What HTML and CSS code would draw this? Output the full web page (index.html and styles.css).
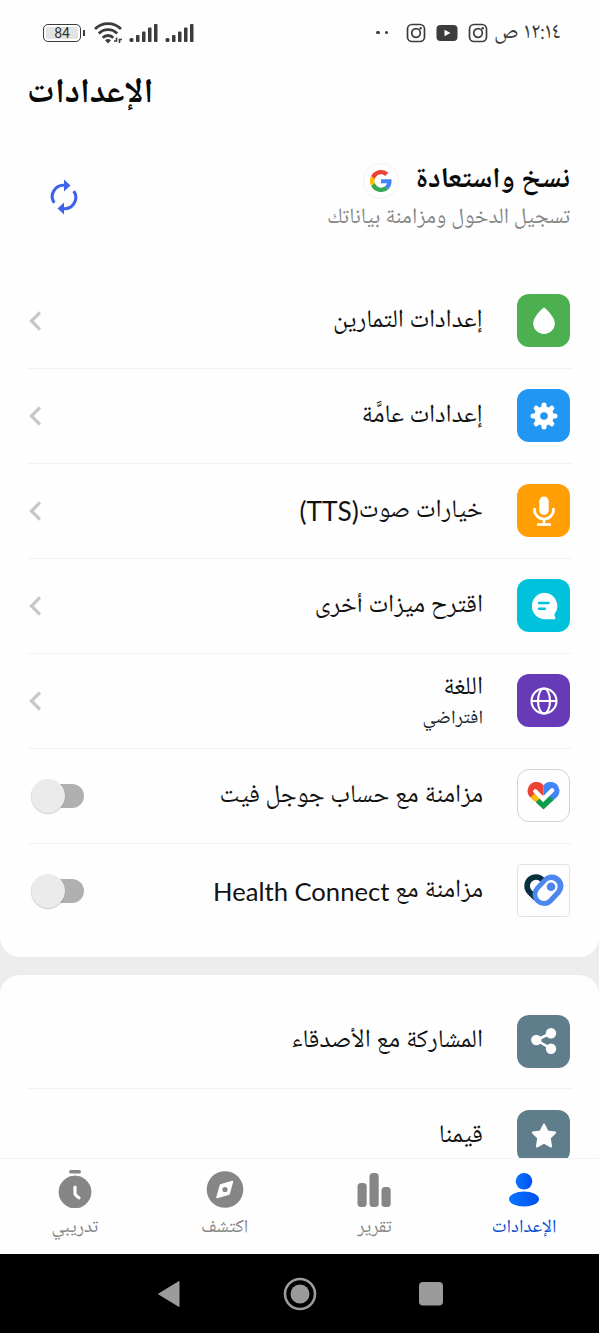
FILE: index.html
```html
<!DOCTYPE html>
<html lang="ar" dir="rtl">
<head>
<meta charset="utf-8">
<title>الإعدادات</title>
<link rel="stylesheet" href="styles.css">
</head>
<body>
<svg class="defs" width="0" height="0">
  <defs>
    <symbol id="chevron" viewBox="0 0 12 20"><path d="M11 1.500 2.500 10l8.500 8.500" fill="none" stroke="#c8c8c8" stroke-width="3.300"/></symbol>
    <symbol id="insta" viewBox="0 0 20 20"><g fill="none" stroke="#3c3c3c" stroke-width="1.700"><rect x="1.500" y="1.500" width="17" height="17" rx="4.500"/><circle cx="10" cy="10" r="4.300"/></g><circle cx="14.700" cy="5.200" r="1.200" fill="#3c3c3c"/></symbol>
    <symbol id="signal" viewBox="0 0 30 20"><g fill="#3c3c3c"><rect x="0.500" y="15" width="4" height="4" rx="1.500"/><rect x="7" y="12" width="3.500" height="7" rx=".8"/><rect x="13" y="8.500" width="3.500" height="10.500" rx=".8"/><rect x="19" y="4.500" width="3.500" height="14.500" rx=".8"/><rect x="25" y="1" width="3.500" height="18" rx=".8"/></g></symbol>
    <clipPath id="heart"><path d="M16.500 3.200A8.600 8.600 0 0 1 30.500 14.500L16.500 27.500 2.500 14.500A8.600 8.600 0 0 1 16.500 3.200z"/></clipPath>
  </defs>
</svg>
<div class="screen">
  <header class="status">
    <div class="status-start">
      <span class="clock">١٢:١٤ ص</span>
      <svg class="app" width="20" height="20"><use href="#insta"/></svg>
      <svg class="app" width="22" height="18" viewBox="0 0 22 18"><rect x=".5" y="1" width="21" height="16" rx="4" fill="#3c3c3c"/><path d="M8.500 5.800v6.400l6-3.200z" fill="#fff"/></svg>
      <svg class="app" width="20" height="20"><use href="#insta"/></svg>
      <span class="dots"><i></i><i></i></span>
    </div>
    <div class="status-end">
      <svg width="30" height="20"><use href="#signal"/></svg>
      <svg width="30" height="20"><use href="#signal"/></svg>
      <svg class="wifi" width="28" height="22" viewBox="0 0 28 22"><g fill="none" stroke="#3c3c3c" stroke-width="2.800"><path d="M1 7a18.500 18.500 0 0 1 26 0"/><path d="M4.800 11.500a13 13 0 0 1 18.400 0"/><path d="M8.700 15.700a7.500 7.500 0 0 1 10.600 0"/></g><path d="M11 18.200q3-2.400 6 0L14 21.500z" fill="#3c3c3c"/><path d="M20 19h2.500v-3.500M25.500 21v-3.500H28" fill="none" stroke="#3c3c3c" stroke-width="1.600"/></svg>
      <span class="battery"><b>84</b></span>
    </div>
  </header>

  <main class="content">
    <section class="card card-main">
      <h1>الإعدادات</h1>
      <div class="backup">
        <div class="backup-text">
          <div class="backup-head">
            <h2>نسخ واستعادة</h2>
            <span class="google"><svg width="22" height="22" viewBox="0 0 48 48"><path fill="#4285f4" d="M46.980 24.550c0-1.570-.15-3.090-.38-4.550H24v9.020h12.940c-.58 2.960-2.260 5.480-4.780 7.180l7.730 6c4.510-4.180 7.090-10.360 7.090-17.650z"/><path fill="#34a853" d="M24 48c6.480 0 11.930-2.130 15.890-5.810l-7.730-6c-2.150 1.450-4.920 2.300-8.160 2.300-6.260 0-11.570-4.220-13.470-9.910l-7.980 6.190C6.510 42.620 14.620 48 24 48z"/><path fill="#fbbc05" d="M10.530 28.590a14.500 14.500 0 0 1 0-9.180l-7.980-6.190a24 24 0 0 0 0 21.560z"/><path fill="#ea4335" d="M24 9.500c3.540 0 6.710 1.220 9.210 3.600l6.850-6.850C35.900 2.380 30.470 0 24 0 14.620 0 6.510 5.380 2.560 13.220l7.980 6.190C12.430 13.720 17.740 9.500 24 9.500z"/></svg></span>
          </div>
          <p>تسجيل الدخول ومزامنة بياناتك</p>
        </div>
        <svg class="sync" width="28" height="36" viewBox="0 0 28 36"><g fill="none" stroke="#4163ea" stroke-width="3.100"><path d="M4.200 23.800A11.300 11.300 0 0 1 15 6.300"/><path d="M23.800 12.200A11.300 11.300 0 0 1 13 29.700"/></g><path fill="#4163ea" d="M14 .5 20.500 6.500 14 12.500zM14 23.500 7.500 29.500 14 35.500z"/></svg>
      </div>
      <ul class="rows">
        <li class="row"><span class="tile green"><svg width="24" height="28" viewBox="0 0 24 28"><path fill="#fff" d="M12 .5c.8 0 10.800 9.200 10.800 15.700a10.800 10.800 0 0 1-21.600 0C1.200 9.700 11.200.5 12 .5z"/></svg></span><div class="label">إعدادات التمارين</div><svg class="chev" width="12" height="20"><use href="#chevron"/></svg></li>
        <li class="row"><span class="tile blue"><svg width="28" height="28" viewBox="-14 -14 28 28"><g stroke="#fff" stroke-width="5" stroke-linecap="round"><path d="M0-11V11M-11 0H11M-7.800-7.800 7.800 7.800M7.800-7.800-7.800 7.800"/></g><circle r="9.800" fill="#fff"/><circle r="3.800" fill="#2196f3"/></svg></span><div class="label">إعدادات عامَّة</div><svg class="chev" width="12" height="20"><use href="#chevron"/></svg></li>
        <li class="row"><span class="tile orange"><svg width="24" height="32" viewBox="0 0 24 32"><rect x="7.300" y="1.500" width="9.400" height="18.500" rx="4.700" fill="#fff"/><path d="M2.500 13v1.500a9.500 9.500 0 0 0 19 0V13M12 24v5M5 29.500h14" fill="none" stroke="#fff" stroke-width="2.700"/></svg></span><div class="label">خيارات صوت<span class="latin tts">(TTS)</span></div><svg class="chev" width="12" height="20"><use href="#chevron"/></svg></li>
        <li class="row"><span class="tile cyan"><svg width="28" height="28" viewBox="0 0 28 28"><path d="M14 .7a13.300 13.300 0 0 1 10.300 21.700L25.300 26q.2 1.200-1 1.200H14A13.300 13.300 0 0 1 14 .7z" fill="#fff"/><path d="M9 11h9.500M9 16.800h6" stroke="#00c2dc" stroke-width="2.400" stroke-linecap="round"/></svg></span><div class="label">اقترح ميزات أخرى</div><svg class="chev" width="12" height="20"><use href="#chevron"/></svg></li>
        <li class="row"><span class="tile purple"><svg width="28" height="28" viewBox="0 0 28 28"><g fill="none" stroke="#fff" stroke-width="2.100"><circle cx="14" cy="14" r="12.500"/><ellipse cx="14" cy="14" rx="6" ry="12.500"/><path d="M1.500 14h25"/></g></svg></span><div class="label two"><span>اللغة</span><span class="sub">افتراضي</span></div><svg class="chev" width="12" height="20"><use href="#chevron"/></svg></li>
        <li class="row"><span class="tile fit"><svg width="33" height="28" viewBox="0 0 33 28"><g clip-path="url(#heart)"><path fill="#ea4335" d="M0 0h16.500v13L5.500 20 0 14z"/><path fill="#4285f4" d="M16.500 0H33v15l-6 5.500-10.500-7z"/><path fill="#fbbc04" d="m3.500 15.500 3.500-3.500 7.500 3-6 6z"/><path fill="#0f9d48" d="m8.500 20.500 5.500-5.500 2.500 2.500 5.500-4.500 4.500 5.500-10 9.500z"/></g><path d="M8.300 9.300 16.200 17.200 25.200 8.300" fill="none" stroke="#fff" stroke-width="4.400" stroke-linecap="round"/></svg></span><div class="label">مزامنة مع حساب جوجل فيت</div><span class="switch"><i></i></span></li>
        <li class="row"><span class="tile health"><svg width="40" height="34" viewBox="0 0 40 34"><path d="M18.500 5.800A8.900 8.900 0 0 0 5.500 18L12 24.500" fill="none" stroke="#07303f" stroke-width="5.600"/><path d="M28 12 20 20.500" stroke="#4c86ee" stroke-width="23" stroke-linecap="round"/><path d="M27.200 12.500 19.800 20.500" stroke="#fff" stroke-width="13" stroke-linecap="round"/><circle cx="27" cy="12.800" r="4.300" fill="#4c86ee"/></svg></span><div class="label">مزامنة مع <span class="latin">Health Connect</span></div><span class="switch"><i></i></span></li>
      </ul>
    </section>
    <section class="card card-more">
      <ul class="rows">
        <li class="row"><span class="tile slate"><svg width="26" height="26" viewBox="0 0 26 26"><path d="M20 5.200 5.300 12 20 20.700" fill="none" stroke="#fff" stroke-width="2.600"/><g fill="#fff"><circle cx="20" cy="5.200" r="5.200"/><circle cx="5.300" cy="12" r="5.200"/><circle cx="20" cy="20.700" r="5.200"/></g></svg></span><div class="label">المشاركة مع الأصدقاء</div></li>
        <li class="row"><span class="tile slate"><svg width="26" height="26" viewBox="-13 -13 26 26"><path d="M0-11.500 3.500-4.600 11.200-3.500 5.700 2 7.100 10.500 0 6.600-7.100 10.500-5.700 2-11.200-3.500-3.500-4.600z" fill="#fff" stroke="#fff" stroke-width="2" stroke-linejoin="round"/></svg></span><div class="label">قيمنا</div></li>
      </ul>
    </section>
  </main>

  <nav class="tabs">
    <a class="tab active"><svg width="34" height="38" viewBox="0 0 34 38"><defs><linearGradient id="g"><stop offset="0" stop-color="#0a74ff"/><stop offset="1" stop-color="#0050f0"/></linearGradient></defs><circle cx="17" cy="11.300" r="8.300" fill="url(#g)"/><ellipse cx="17" cy="29" rx="15" ry="7.500" fill="url(#g)"/></svg><span>الإعدادات</span></a>
    <a class="tab"><svg width="36" height="38" viewBox="0 0 36 38"><g fill="#868686"><rect x="1.500" y="13" width="9.200" height="24" rx="3.500"/><rect x="13.500" y="3" width="9.200" height="34" rx="3.500"/><rect x="25.500" y="17" width="9.200" height="20" rx="3.500"/></g></svg><span>تقرير</span></a>
    <a class="tab"><svg width="38" height="38" viewBox="0 0 38 38"><circle cx="19" cy="19.500" r="18.300" fill="#868686"/><path d="M14.500 15 26.500 11.500l-3.500 12.500L11 27.500z" fill="#fff" stroke="#fff" stroke-width="1.500" stroke-linejoin="round"/><circle cx="19" cy="19.500" r="2.600" fill="#868686"/></svg><span>اكتشف</span></a>
    <a class="tab"><svg width="36" height="38" viewBox="0 0 36 38"><rect x="12" y="0" width="12" height="3.500" rx="1.700" fill="#868686"/><circle cx="18" cy="22" r="16" fill="#868686" stroke="#868686" stroke-width="1"/><path d="M18 17v6.500q0 1.500 4 4.300" fill="none" stroke="#fff" stroke-width="3.200" stroke-linecap="round"/></svg><span>تدريبي</span></a>
  </nav>

  <footer class="sysnav" dir="ltr">
    <svg width="36" height="36" viewBox="0 0 36 36"><path d="M7.500 18 28 5.500v25z" fill="#9b9b9b" stroke="#9b9b9b" stroke-linejoin="round"/></svg>
    <svg width="36" height="36" viewBox="0 0 36 36"><circle cx="18" cy="18" r="15" fill="none" stroke="#9b9b9b" stroke-width="2.600"/><circle cx="18" cy="18" r="9.500" fill="#9b9b9b"/></svg>
    <svg width="36" height="36" viewBox="0 0 36 36"><rect x="6" y="6" width="24" height="23.500" rx="4" fill="#9b9b9b"/></svg>
  </footer>
</div>
</body>
</html>
```
FILE: styles.css
```css
* { box-sizing: border-box; margin: 0; padding: 0; }
body { background: #ededed; color: #121212; font-family: "Noto Naskh Arabic UI", "Noto Naskh Arabic", "Noto Sans Arabic", "DejaVu Sans", sans-serif; white-space: nowrap; }
ul { list-style: none; }
svg { display: block; flex: none; }
.defs { position: absolute; }
.screen { width: 599px; height: 1333px; display: flex; flex-direction: column; overflow: hidden; }
.latin { font-family: Lato, sans-serif; font-size: 25.600px; vertical-align: -1px; line-height: 30px; }
.tts { font-size: 26.300px; }

.status { height: 65px; background: #fefefe; display: flex; justify-content: space-between; padding: 0 38px 0 43px; }
.status-start, .status-end { display: flex; align-items: center; height: 65px; }
.clock { font-size: 22.400px; line-height: 40px; color: #3c3c3c; margin-left: -4px; }
.app { margin-right: 10px; }
.dots { display: flex; gap: 5px; margin-right: 18px; }
.dots i { width: 3.500px; height: 3.500px; border-radius: 50%; background: #3c3c3c; }
.status-end { gap: 6px; }
.wifi { margin-right: 1px; }
.battery { position: relative; width: 38px; height: 18px; border: 1.500px solid #3c3c3c; border-radius: 5px; margin-right: 7px; display: flex; align-items: center; justify-content: center; background: #e4e4e4; box-shadow: inset 0 0 0 2px #fefefe; }
.battery b { font: 14px/16px Roboto, sans-serif; color: #333; }
.battery::after { content: ""; position: absolute; right: -5px; top: 5px; width: 2px; height: 6px; background: #3c3c3c; }

.content { flex: 1; min-height: 0; overflow: hidden; display: flex; flex-direction: column; gap: 18px; }
.card { background: #fefefe; flex: none; }
.card-main { height: 892px; border-radius: 0 0 20px 20px; }
.card-more { height: 300px; border-radius: 20px 20px 0 0; padding-top: 19px; }
h1 { height: 60px; line-height: 58px; padding-left: 27px; text-align: left; font-size: 34.700px; color: #0a0a0a; }
.backup { height: 149px; display: flex; justify-content: space-between; padding: 33px 29px 0 50px; }
.backup-head { display: flex; align-items: center; gap: 17px; height: 44px; }
h2 { font-size: 28.800px; color: #0a0a0a; line-height: 42px; }
.google { width: 36px; height: 36px; border: 1px solid #f3f3f3; border-radius: 50%; display: flex; align-items: center; justify-content: center; margin-top: 1px; }
.backup p { font-size: 22px; line-height: 30px; color: #858585; }
.sync { margin-top: 21px; }

.row { height: 95px; margin: 0 27px; padding: 0 2px 1px; border-bottom: 1px solid #f3f3f3; display: flex; align-items: center; }
.card-more .row { padding-bottom: 0; }
.row:last-child { border-bottom-color: transparent; }
.tile { width: 53px; height: 53px; border-radius: 12px; display: flex; align-items: center; justify-content: center; flex: none; }
.green { background: #4caf50; }
.blue { background: #2196f3; }
.orange { background: #ff9f05; }
.cyan { background: #00c2dc; }
.purple { background: #673ab7; }
.slate { background: #607d8b; }
.fit { border: 1px solid #d2d2d2; }
.health { border: 1px solid #e6e2e2; border-radius: 4px; }
.label { flex: 1; margin-right: 34px; padding-bottom: 2px; font-size: 25.400px; line-height: 36px; }
.two { display: flex; flex-direction: column; align-items: flex-start; padding-bottom: 0; }
.sub { font-size: 19.300px; line-height: 28px; color: #14232d; }
.switch { position: relative; width: 53px; height: 24px; margin-left: 2px; border-radius: 12px; background: #b0b0b0; }
.switch i { position: absolute; left: 0; top: -5px; width: 34px; height: 34px; border-radius: 50%; background: #ebebeb; box-shadow: 0 1px 1px #0003; }

.tabs { height: 96px; background: #fefefe; display: flex; border-top: 1px solid #f3f3f3; }
.tab { flex: 1; display: flex; flex-direction: column; align-items: center; padding-top: 11px; gap: 5px; color: #868686; font-size: 19px; line-height: 30px; }
.active { color: #0b4fd0; }
.sysnav { height: 79px; background: #000; display: flex; justify-content: center; align-items: center; gap: 95px; }
```
